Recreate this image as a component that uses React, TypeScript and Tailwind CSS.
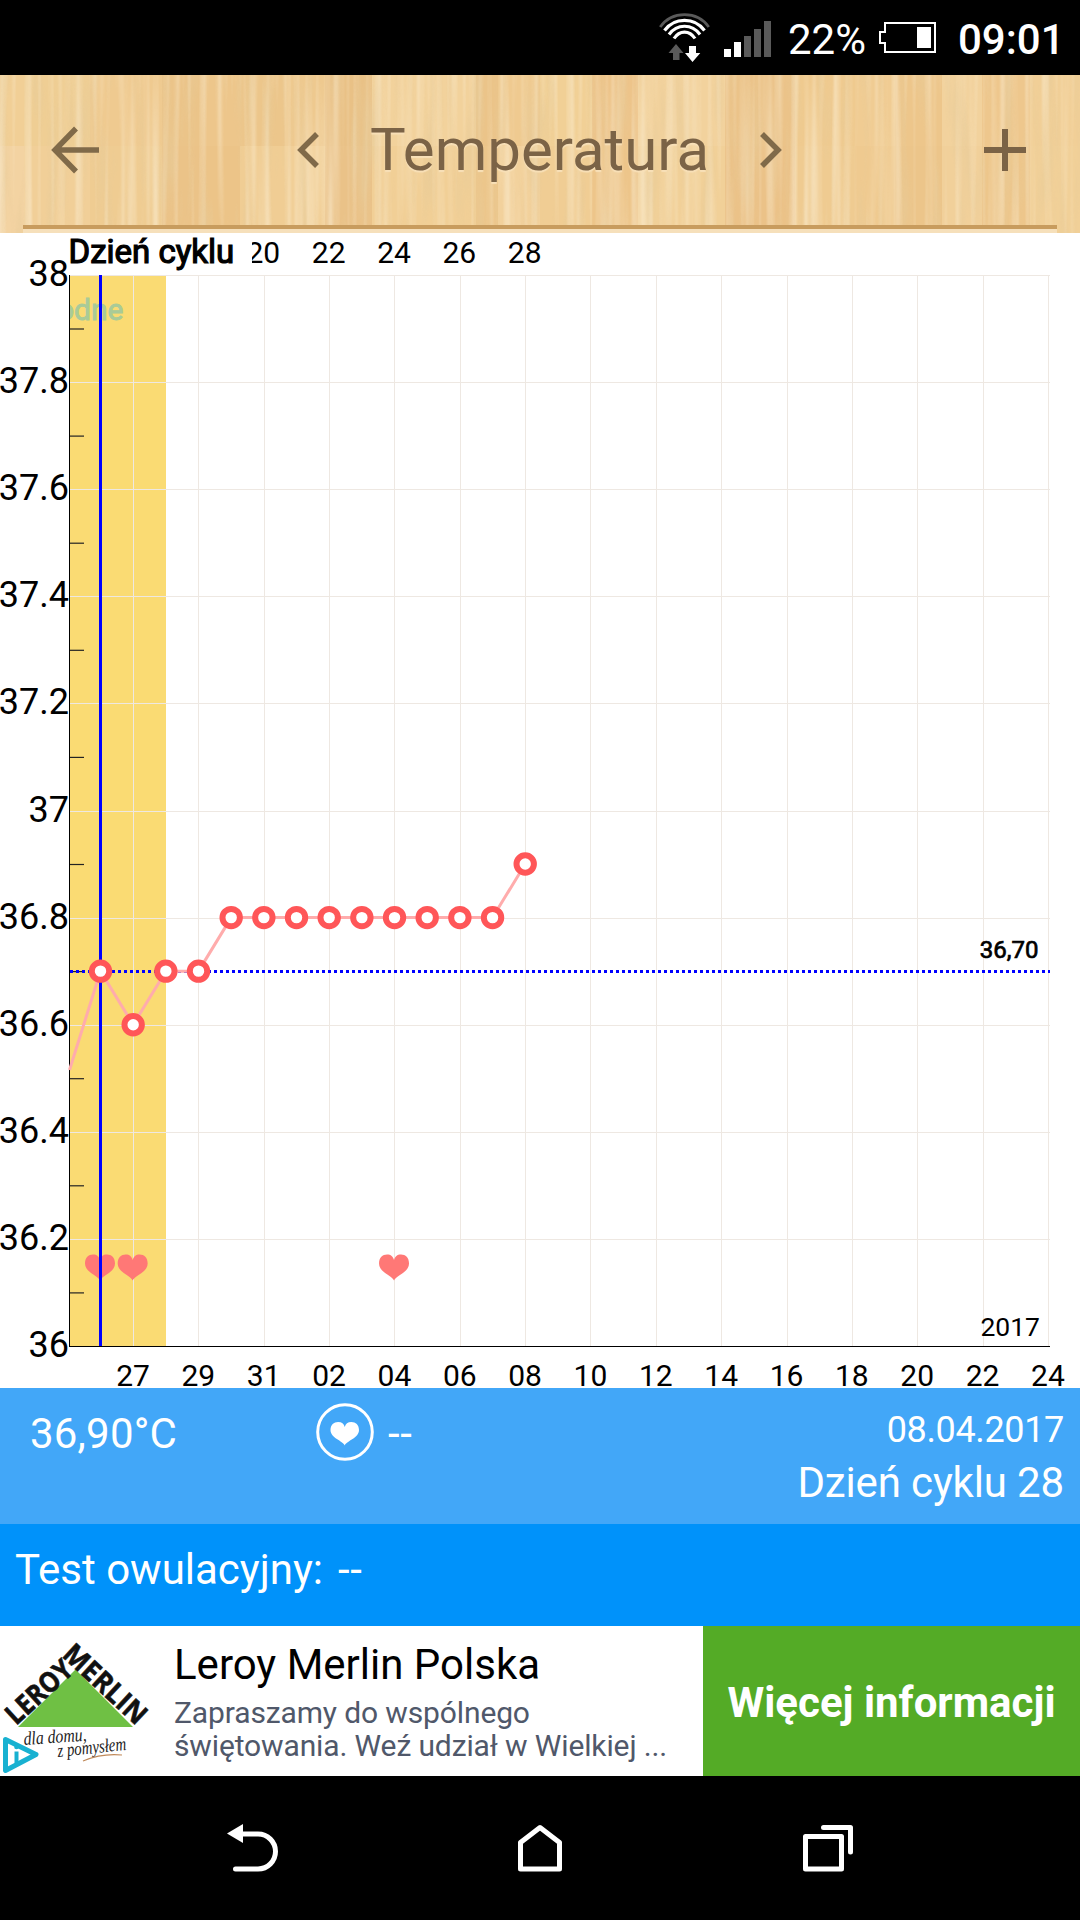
type Plank = { x: number; w: number; top: string; bottom: string };

const planks: Plank[] = [
    { x: 0, w: 24, top: "#f1cf96", bottom: "#f3d3a2" },
    { x: 24, w: 66, top: "#efce94", bottom: "#f1cf98" },
    { x: 90, w: 72, top: "#efca90", bottom: "#efcc92" },
    { x: 162, w: 44, top: "#ebc489", bottom: "#ebc388" },
    { x: 206, w: 34, top: "#edc68b", bottom: "#ecc488" },
    { x: 240, w: 45, top: "#ecc68b", bottom: "#f0cd94" },
    { x: 285, w: 40, top: "#eec98f", bottom: "#f1cf97" },
    { x: 325, w: 47, top: "#e9c186", bottom: "#eac288" },
    { x: 372, w: 104, top: "#f2d29c", bottom: "#f1cf96" },
    { x: 476, w: 22, top: "#ebc489", bottom: "#ecc68b" },
    { x: 498, w: 42, top: "#efca90", bottom: "#f2d19c" },
    { x: 540, w: 52, top: "#f1d096", bottom: "#f0cd94" },
    { x: 592, w: 46, top: "#edc48a", bottom: "#edc58a" },
    { x: 638, w: 87, top: "#f2d29d", bottom: "#f1d098" },
    { x: 725, w: 70, top: "#ebc389", bottom: "#ebc288" },
    { x: 795, w: 60, top: "#efca8f", bottom: "#efcb91" },
    { x: 855, w: 40, top: "#f0cc93", bottom: "#efca90" },
    { x: 895, w: 47, top: "#edc68b", bottom: "#ecc58a" },
    { x: 942, w: 40, top: "#f2d29d", bottom: "#f1d09a" },
    { x: 982, w: 48, top: "#eec78d", bottom: "#edc68b" },
    { x: 1030, w: 50, top: "#f1cf97", bottom: "#f1d098" },
];

const plot = { left: 70, right: 1050, top: 43, bottom: 1113.5 };
const dayStep = 32.67;
const dayX = (day: number) => 100.5 + (day - 15) * dayStep;
const tempY = (temp: number) => plot.bottom - 0.5 - (temp - 36) * 535.5;

const yLabels = ["38", "37.8", "37.6", "37.4", "37.2", "37", "36.8", "36.6", "36.4", "36.2", "36"];
const dates = ["27", "29", "31", "02", "04", "06", "08", "10", "12", "14", "16", "18", "20", "22", "24"];
const cycleDays = [20, 22, 24, 26, 28];

const readings = [
    { day: 15, temp: 36.7 },
    { day: 16, temp: 36.6 },
    { day: 17, temp: 36.7 },
    { day: 18, temp: 36.7 },
    { day: 19, temp: 36.8 },
    { day: 20, temp: 36.8 },
    { day: 21, temp: 36.8 },
    { day: 22, temp: 36.8 },
    { day: 23, temp: 36.8 },
    { day: 24, temp: 36.8 },
    { day: 25, temp: 36.8 },
    { day: 26, temp: 36.8 },
    { day: 27, temp: 36.8 },
    { day: 28, temp: 36.9 },
];

const heartDays = [15, 16, 24];
const heartPath = "M15 26 C13 21 0 18 0 9 C0 3 3.500 0 8 0 C12 0 14 2 15 5.500 C16 2 18 0 22 0 C26.500 0 30 3 30 9 C30 18 17 21 15 26Z";

function StatusBar() {
    return (
        <div className="flex h-[75px] items-start bg-black text-white">
            <svg className="mt-[13px] ml-[659px] h-[49px] w-[51px]" viewBox="0 0 51 49" fill="none">
                <path d="M1.200 14 C13 -2.500 38 -2.500 49.800 14" stroke="#5a5a5a" strokeWidth="2.800" />
                <g stroke="#fff" strokeWidth="3.200">
                    <path d="M5.500 17.500 C15.500 4 35.500 4 45.500 17.500" />
                    <path d="M10 21.500 C18 10.500 33 10.500 41 21.500" />
                    <path d="M15 25.500 C20.500 17 30.500 17 36 25.500" />
                </g>
                <path d="M17 31 L24.500 40 H20.500 V47 H14 V40 H9.500Z" fill="#5a5a5a" />
                <path d="M33.500 49 L26 40 H30 V33 H37 V40 H41.300Z" fill="#fff" />
            </svg>
            <div className="ml-[14px] flex h-[57px] items-end gap-[3px]">
                <div className="h-2 w-[7px] bg-white" />
                <div className="h-[15px] w-[7px] bg-white" />
                <div className="h-[21px] w-[7px] bg-[#5a5a5a]" />
                <div className="h-7 w-[7px] bg-[#5a5a5a]" />
                <div className="h-9 w-[7px] bg-[#5a5a5a]" />
            </div>
            <span className="mt-[15px] ml-[17px] w-[91px] text-[42px] leading-[49px]">22%</span>
            <svg className="mt-[22px] h-[31px] w-[57px]" viewBox="0 0 57 31">
                <path d="M6 1 H56 V30 H6 V21 H1 V10 H6Z" fill="none" stroke="#fff" strokeWidth="2" />
                <rect x="38" y="5" width="14" height="21" fill="#fff" />
            </svg>
            <span className="mt-[15px] ml-[22px] text-[42px] leading-[49px] font-medium">09:01</span>
        </div>
    );
}

function WoodTexture() {
    return (
        <svg className="absolute inset-0 h-full w-full" viewBox="0 0 1080 158" preserveAspectRatio="none">
            <defs>
                <filter id="dark-grain" x="0" y="0" width="100%" height="100%">
                    <feTurbulence type="fractalNoise" baseFrequency="0.07 0.007" numOctaves="3" seed="11" />
                    <feColorMatrix values="0 0 0 0 0.80  0 0 0 0 0.60  0 0 0 0 0.32  3 0 0 0 -1.45" />
                </filter>
                <filter id="light-grain" x="0" y="0" width="100%" height="100%">
                    <feTurbulence type="fractalNoise" baseFrequency="0.12 0.003" numOctaves="2" seed="4" />
                    <feColorMatrix values="0 0 0 0 0.97  0 0 0 0 0.87  0 0 0 0 0.68  2.6 0 0 0 -1.15" />
                </filter>
            </defs>
            {planks.map((p) => (
                <g key={p.x}>
                    <rect x={p.x} y="0" width={p.w} height="71" fill={p.top} />
                    <rect x={p.x} y="71" width={p.w} height="87" fill={p.bottom} />
                </g>
            ))}
            <rect width="1080" height="158" filter="url(#dark-grain)" opacity="0.6" />
            <rect width="1080" height="158" filter="url(#light-grain)" opacity="0.5" />
        </svg>
    );
}

function Header() {
    return (
        <header className="relative h-[158px] overflow-hidden">
            <WoodTexture />
            <div className="relative flex h-[150px] items-center text-[#7b6346]">
                <svg className="ml-[51px] h-12 w-12" viewBox="0 0 48 48" fill="none" stroke="#806a49" strokeWidth="5.500">
                    <path d="M25 2.500 L4 24 L25 45.500 M4 24 H48" />
                </svg>
                <svg className="ml-[198px] h-9 w-[22px]" viewBox="0 0 22 36" fill="none" stroke="#806a49" strokeWidth="5.500">
                    <path d="M20 2 L4 18 L20 34" />
                </svg>
                <h1 className="flex-1 text-center text-[60px] leading-[70px] [text-shadow:0_2px_1px_#f8e0b8]">
                    Temperatura
                </h1>
                <svg className="h-9 w-[22px]" viewBox="0 0 22 36" fill="none" stroke="#806a49" strokeWidth="5.500">
                    <path d="M2 2 L18 18 L2 34" />
                </svg>
                <svg className="mr-[54px] ml-[202px] h-[42px] w-[42px]" viewBox="0 0 42 42" stroke="#7b6346" strokeWidth="6">
                    <path d="M21 0 V42 M0 21 H42" />
                </svg>
            </div>
            <div className="relative mx-[23px] h-1 bg-[#c89c5e]" />
            <div className="relative mx-[23px] h-1 bg-[#f6e0bb]" />
        </header>
    );
}

function Chart() {
    const line = readings.map((r) => `${dayX(r.day)},${tempY(r.temp)}`).join(" ");

    return (
        <svg className="block h-[1155px] w-full overflow-visible" viewBox="0 0 1080 1155">
            <defs>
                <clipPath id="plot">
                    <rect x="69" y="0" width="982" height="1155" />
                </clipPath>
                <clipPath id="days">
                    <rect x="252" y="0" width="828" height="42" />
                </clipPath>
            </defs>

            <rect x="70" y="43" width="96" height="1071" fill="#fadb73" />
            <text
                x="123.500"
                y="87"
                fontSize="30"
                fill="#a9cb98"
                stroke="#a9cb98"
                strokeWidth="0.900"
                textAnchor="end"
                clipPath="url(#plot)"
            >
                płodne
            </text>

            {/* grid */}
            <g stroke="#eee8e2" shapeRendering="crispEdges">
                {yLabels.slice(0, 10).map((label, i) => (
                    <line key={label} x1={70} x2={1050} y1={42.5 + i * 107.1} y2={42.5 + i * 107.1} />
                ))}
                {dates.map((label, i) => (
                    <line key={label} x1={133.5 + i * 65.35} x2={133.5 + i * 65.35} y1={43} y2={1113} />
                ))}
            </g>
            <g stroke="#222" strokeWidth="1.200">
                {yLabels.slice(0, 10).map((label, i) => (
                    <line key={label} x1={70} x2={84} y1={96 + i * 107.1} y2={96 + i * 107.1} />
                ))}
            </g>
            <path d="M69.500 42 V1113.500 H1050" fill="none" stroke="#000" shapeRendering="crispEdges" />

            {/* series */}
            {heartDays.map((day) => (
                <path key={day} d={heartPath} transform={`translate(${dayX(day) - 15.5} 1021.500)`} fill="#ff7876" />
            ))}
            <line x1="100.500" x2="100.500" y1="42" y2="1113" stroke="#0000ff" strokeWidth="3" />
            <line x1="70" x2="1050" y1="738.500" y2="738.500" stroke="#0000ff" strokeWidth="3" strokeDasharray="3 3" />
            <polyline points={`69.5,837 ${line}`} fill="none" stroke="#ffacac" strokeWidth="3" />
            {readings.map((r) => (
                <circle
                    key={r.day}
                    cx={dayX(r.day)}
                    cy={tempY(r.temp)}
                    r="8.700"
                    fill="#fff"
                    stroke="#ff5658"
                    strokeWidth="6"
                />
            ))}

            <g fill="#000">
                <g fontSize="36" textAnchor="end">
                    {yLabels.map((label, i) => (
                        <text key={label} x="69" y={53 + i * 107.1}>
                            {label}
                        </text>
                    ))}
                </g>
                <g fontSize="30" textAnchor="middle">
                    {dates.map((label, i) => (
                        <text key={label} x={133 + i * 65.35} y="1153">
                            {label}
                        </text>
                    ))}
                </g>
                <g fontSize="30" textAnchor="middle" clipPath="url(#days)">
                    {cycleDays.map((day) => (
                        <text key={day} x={dayX(day) - 0.5} y="29.500">
                            {day}
                        </text>
                    ))}
                </g>
                <text x="68.500" y="29.500" fontSize="33" stroke="#000" strokeWidth="1.200">
                    Dzień cyklu
                </text>
                <text x="1038.500" y="724.500" fontSize="24" stroke="#000" strokeWidth="0.700" textAnchor="end">
                    36,70
                </text>
                <text x="1040" y="1103" fontSize="26.500" textAnchor="end">
                    2017
                </text>
            </g>
        </svg>
    );
}

function DaySummary() {
    return (
        <section className="text-white">
            <div className="flex h-[136px] items-start bg-[#42a7f8] pr-4 pl-[30px] text-[42px] leading-[49px]">
                <span className="mt-[21px] w-[286px] tracking-[0.2px]">36,90°C</span>
                <svg className="mt-[15px] h-[58px] w-[58px]" viewBox="0 0 58 58">
                    <circle cx="29" cy="29" r="27.300" fill="none" stroke="#fff" strokeWidth="3" />
                    <path d={heartPath} transform="translate(14.500 19) scale(0.950 0.900)" fill="#fff" />
                </svg>
                <span className="mt-[21px] ml-[14px] tracking-[0.6px]">--</span>
                <div className="mt-[21px] ml-auto flex flex-col items-end gap-[7px]">
                    <span className="text-4xl leading-[42px] tracking-[-0.35px]">08.04.2017</span>
                    <span className="tracking-[-0.15px]">Dzień cyklu 28</span>
                </div>
            </div>
            <div className="h-[102px] bg-[#0092fa] px-[15px] pt-[21px] text-[42px] leading-[49px]">
                Test owulacyjny:<span className="ml-1 tracking-[0.6px]"> --</span>
            </div>
        </section>
    );
}

function LeroyLogo() {
    return (
        <svg className="h-[150px] w-[174px] shrink-0" viewBox="0 0 174 150">
            <path d="M75.500 43.500 L133 101 H18Z" fill="#6fc044" />
            <g fill="#111" stroke="#111" strokeWidth="0.600" fontFamily="'Open Sans', sans-serif" fontWeight="700" fontSize="28">
                <text transform="translate(16 100) rotate(-42.500)" textLength="80" lengthAdjust="spacingAndGlyphs">
                    LEROY
                </text>
                <text transform="translate(61 30) rotate(43)" textLength="103" lengthAdjust="spacingAndGlyphs">
                    MERLIN
                </text>
            </g>
            <g fill="#222" fontFamily="'Liberation Serif', serif" fontStyle="italic" fontSize="19">
                <text transform="translate(24 119) rotate(-4)" textLength="63" lengthAdjust="spacingAndGlyphs">
                    dla domu,
                </text>
                <text transform="translate(58 131) rotate(-6)" textLength="69" lengthAdjust="spacingAndGlyphs">
                    z pomysłem
                </text>
            </g>
            <path d="M83 135 Q102 127 122 129" fill="none" stroke="#c08a5a" strokeWidth="1.200" />
            <path d="M5.500 113.500 L36 128.500 L5.500 144.500Z" fill="#fff" stroke="#18b1d1" strokeWidth="5" strokeLinejoin="round" />
            <path d="M16.500 125.500 V137" stroke="#18b1d1" strokeWidth="4" />
            <circle cx="16.500" cy="121" r="2.300" fill="#18b1d1" />
        </svg>
    );
}

function AdBanner() {
    return (
        <section className="flex h-[150px] bg-white">
            <LeroyLogo />
            <div className="w-[529px] pt-[14px]">
                <h2 className="text-[42px] leading-[49px] text-black">Leroy Merlin Polska</h2>
                <p className="mt-[7px] text-3xl leading-[33px] tracking-[-0.13px] whitespace-nowrap text-[#50586a]">
                    Zapraszamy do wspólnego
                    <br />
                    świętowania. Weź udział w Wielkiej ...
                </p>
            </div>
            <button className="flex-1 pt-0.5 text-[42px] leading-[49px] font-bold whitespace-nowrap bg-[#54ab26] text-white">
                Więcej informacji
            </button>
        </section>
    );
}

function NavBar() {
    return (
        <nav className="flex h-36 items-center bg-black">
            <svg className="ml-[227px] h-12 w-[52px]" viewBox="0 0 52 48" fill="none">
                <path d="M14 10 H31 A17.500 17.500 0 0 1 31 45 H8.500" stroke="#fff" strokeWidth="5" strokeLinecap="round" />
                <path d="M0 9.500 L16 0 V19Z" fill="#fff" />
            </svg>
            <svg className="ml-[239px] h-12 w-11" viewBox="0 0 44 48" fill="none" stroke="#fff" strokeWidth="5" strokeLinejoin="round">
                <path d="M2.500 18.500 L22 3.500 L41.500 18.500 V45 H2.500Z" />
            </svg>
            <svg
                className="ml-[241px] h-12 w-[51px]"
                viewBox="0 0 51 48"
                fill="none"
                stroke="#fff"
                strokeWidth="5"
                strokeLinecap="round"
                strokeLinejoin="round"
            >
                <path d="M2.500 12.500 H38.500 V45 H2.500Z" />
                <path d="M20.500 3.500 H47.500 V28" />
            </svg>
        </nav>
    );
}

export default function App() {
    return (
        <main className="flex h-[1920px] w-[1080px] flex-col overflow-hidden bg-white font-[Roboto,sans-serif]">
            <StatusBar />
            <Header />
            <Chart />
            <DaySummary />
            <AdBanner />
            <NavBar />
        </main>
    );
}
